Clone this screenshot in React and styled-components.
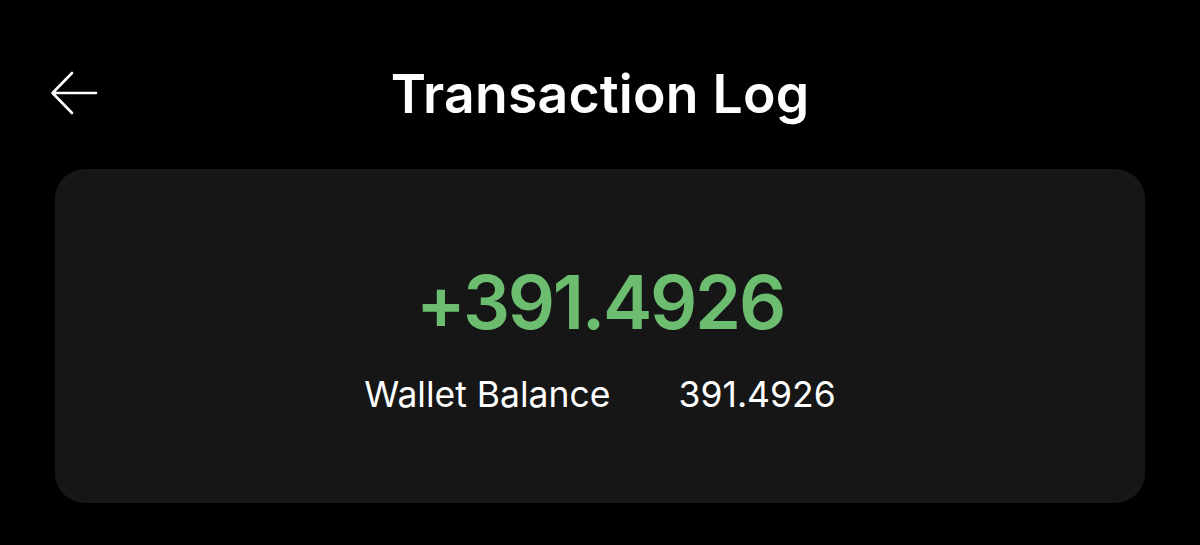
import styled, { createGlobalStyle } from "styled-components";

const GlobalStyle = createGlobalStyle`
  html, body {
    margin: 0;
    padding: 0;
    background: #000;
  }
  body {
    font-family: Inter, "Noto Sans", sans-serif;
    color: #fff;
  }
`;

const BackArrow = () => (
  <svg width="48" height="44" viewBox="0 0 48 44" fill="none">
    <path
      d="M46 22H3M22 2L2.5 22L22 42"
      stroke="#fff"
      strokeWidth="2.6"
      strokeLinecap="round"
      strokeLinejoin="round"
    />
  </svg>
);

const App = () => {
  return (
    <>
      <GlobalStyle />
      <StPage>
        <StHeader>
          <StBackBtn>
            <BackArrow />
          </StBackBtn>
          <StTitle>Transaction Log</StTitle>
        </StHeader>
        <StCard>
          <StAmount>+391.4926</StAmount>
          <StRow>
            <StLabel>Wallet Balance</StLabel>
            <StValue>391.4926</StValue>
          </StRow>
        </StCard>
      </StPage>
    </>
  );
};

export default App;

const StPage = styled.div`
  width: 1200px;
  height: 545px;
  background: #000;
  padding: 0 55px;
  box-sizing: border-box;
  overflow: hidden;
`;

const StHeader = styled.div`
  position: relative;
  height: 169px;
  display: flex;
  align-items: center;
  justify-content: center;
  padding-top: 18px;
  box-sizing: border-box;
`;

const StBackBtn = styled.button`
  position: absolute;
  left: -5px;
  top: 71px;
  background: none;
  border: none;
  padding: 0;
  display: flex;
  cursor: pointer;
`;

const StTitle = styled.h1`
  margin: 0;
  font-size: 53.5px;
  font-weight: 600;
  letter-spacing: 0.2px;
  color: #fff;
`;

const StCard = styled.div`
  height: 334px;
  background: #161616;
  border-radius: 30px;
  display: flex;
  flex-direction: column;
  align-items: center;
  padding-top: 96px;
  box-sizing: border-box;
`;

const StAmount = styled.div`
  font-size: 74px;
  font-weight: 560;
  line-height: 1;
  color: #6cbd70;
  letter-spacing: -2.3px;
`;

const StRow = styled.div`
  display: flex;
  gap: 68px;
  margin-top: 38px;
  font-size: 35.5px;
  line-height: 1;
`;

const StLabel = styled.span`
  color: #fff;
`;

const StValue = styled.span`
  color: #fff;
`;
